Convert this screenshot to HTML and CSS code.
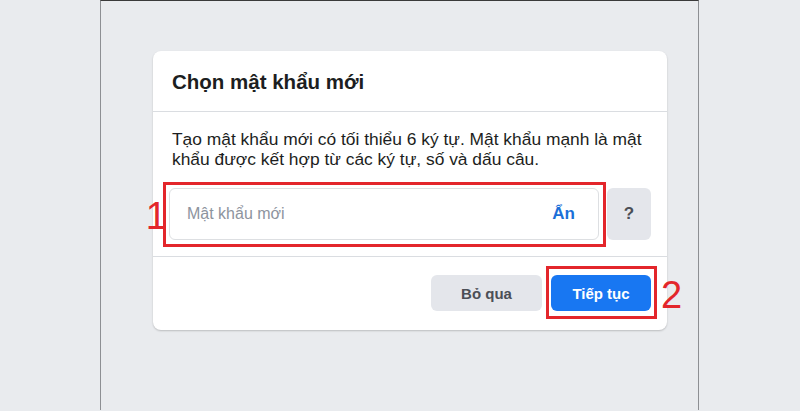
FILE: index.html
```html
<!DOCTYPE html>
<html lang="vi">
<head>
<meta charset="utf-8">
<title>Chọn mật khẩu mới</title>
<link rel="stylesheet" href="styles.css">
</head>
<body>
<div class="frame">
  <div class="card">
    <div class="card-header">
      <h2 class="title">Chọn mật khẩu mới</h2>
    </div>
    <div class="card-body">
      <p class="desc">Tạo mật khẩu mới có tối thiểu 6 ký tự. Mật khẩu mạnh là mật khẩu được kết hợp từ các ký tự, số và dấu câu.</p>
      <div class="input-row">
        <div class="input">
          <span class="placeholder">Mật khẩu mới</span>
          <span class="toggle">Ẩn</span>
          <span class="mark mark-1"></span>
          <span class="num num-1">1</span>
        </div>
        <div class="help">?</div>
      </div>
    </div>
    <div class="card-footer">
      <button class="btn btn-gray">Bỏ qua</button>
      <button class="btn btn-blue">Tiếp tục
        <span class="mark mark-2"></span>
        <span class="num num-2">2</span>
      </button>
    </div>
  </div>
</div>
</body>
</html>
```
FILE: styles.css
```css
html, body {
  margin: 0;
  padding: 0;
  height: 411px;
  overflow: hidden;
  background: #e9ebee;
  font-family: "Liberation Sans", Arial, sans-serif;
}
.frame {
  margin-left: 100px;
  width: 599px;
  height: 410px;
  border-left: 1px solid #8d8f93;
  border-right: 1px solid #8d8f93;
  border-top: 1px solid #3a3a3a;
  padding: 50px 0 0 52px;
  box-sizing: border-box;
  background: #e9ebee;
}
.card {
  width: 514px;
  background: #fff;
  border-radius: 8px;
  box-shadow: 0 1px 2px rgba(0, 0, 0, 0.2);
}
.card-header {
  height: 61px;
  border-bottom: 1px solid #dadde1;
  display: flex;
  align-items: center;
  padding: 0 19px;
  box-sizing: border-box;
}
.title {
  margin: 0;
  font-size: 20.5px;
  font-weight: bold;
  color: #1c1e21;
  line-height: 24px;
  padding-top: 2px;
}
.card-body {
  padding: 17px 16px 16px;
  border-bottom: 1px solid #dadde1;
}
.desc {
  margin: 0 0 19px;
  padding: 0 3px;
  font-size: 17.4px;
  line-height: 20px;
  color: #1c1e21;
}
.input-row {
  display: flex;
  gap: 8px;
}
.input {
  position: relative;
  flex: 1;
  height: 52px;
  border: 1px solid #dddfe2;
  border-radius: 6px;
  display: flex;
  align-items: center;
  justify-content: space-between;
  padding: 0 23px 0 17px;
  box-sizing: border-box;
}
.placeholder {
  font-size: 16px;
  color: #8d949e;
}
.toggle {
  font-size: 17px;
  font-weight: bold;
  color: #1b6fd8;
}
.help {
  width: 44px;
  height: 52px;
  border-radius: 6px;
  background: #e4e6eb;
  display: flex;
  align-items: center;
  justify-content: center;
  font-size: 17px;
  font-weight: bold;
  color: #4b4f56;
}
.card-footer {
  display: flex;
  justify-content: flex-end;
  gap: 9px;
  padding: 18px 16px 19px;
}
.btn {
  position: relative;
  height: 36px;
  border: none;
  border-radius: 6px;
  font-family: "Liberation Sans", Arial, sans-serif;
  font-size: 15px;
  font-weight: bold;
  padding: 0;
  cursor: pointer;
}
.btn-gray {
  width: 111px;
  background: #e4e6eb;
  color: #4b4f56;
}
.btn-blue {
  width: 100px;
  background: #1877f2;
  color: #fff;
}
.mark {
  position: absolute;
  border: 3px solid #e3262b;
  box-sizing: border-box;
}
.mark-1 {
  left: -7px;
  top: -7px;
  right: -8px;
  bottom: -8px;
}
.mark-2 {
  left: -5px;
  top: -9px;
  right: -6px;
  bottom: -8px;
}
.num {
  position: absolute;
  font-family: "Liberation Sans", Arial, sans-serif;
  font-weight: normal;
  font-size: 38px;
  line-height: 38px;
  color: #e3262b;
}
.num-1 {
  right: 100%;
  margin-right: 3px;
  top: 8px;
}
.num-2 {
  left: 100%;
  margin-left: 10px;
  top: 1px;
}
```
